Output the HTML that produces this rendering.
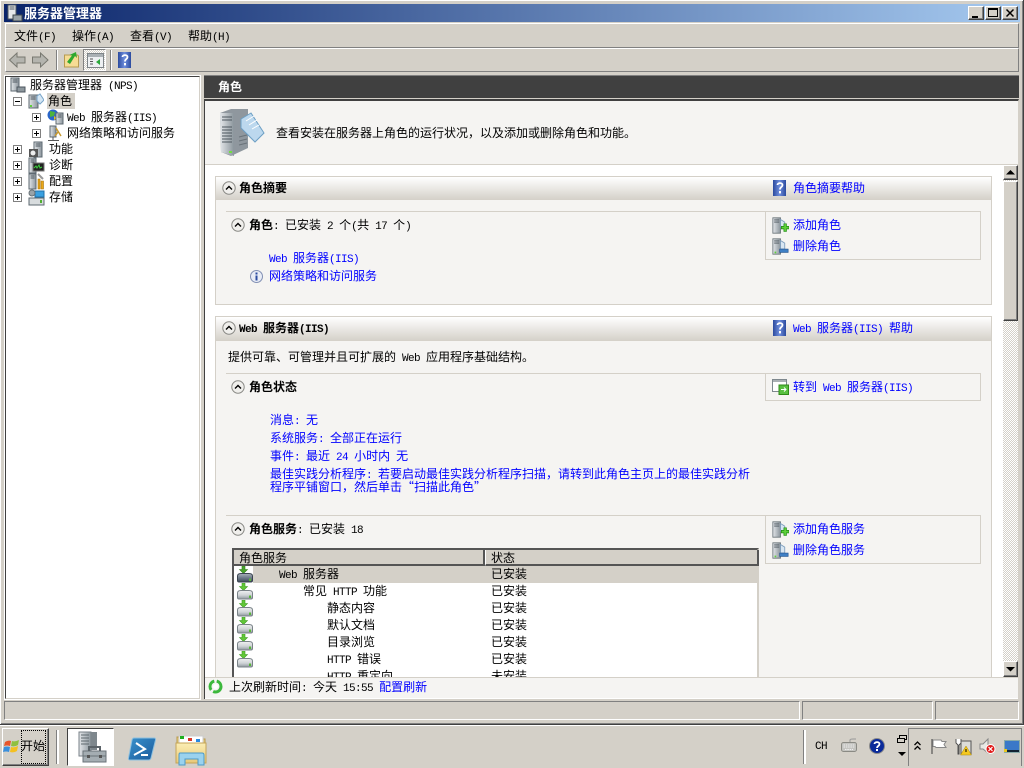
<!DOCTYPE html>
<html lang="zh"><head><meta charset="utf-8"><title>服务器管理器</title>
<style>
*{box-sizing:border-box}
html,body{margin:0;padding:0;width:1024px;height:768px;overflow:hidden;background:#d4d0c8}
.a{position:absolute}
.t{position:absolute;white-space:pre;font:12px/12px "WenQuanYi Zen Hei","Noto Sans CJK SC",sans-serif;color:#000;height:12px}
.t i{font:normal 11px/12px "Liberation Mono",monospace;letter-spacing:-.6px}
.t u{text-decoration:none;font-family:"Noto Sans CJK SC",sans-serif}
.b{font-weight:bold}.b i{font-weight:bold}
.l{color:#00f}
.bar{border:1px solid;border-color:#fff #808080 #808080 #fff}
.hd{background:linear-gradient(#fff,#d4d0c8)}
svg{position:absolute;overflow:visible}
.btn{position:absolute;background:#d4d0c8;border:1px solid;border-color:#fff #404040 #404040 #fff;box-shadow:inset -1px -1px 0 #808080}
</style></head>
<body>
<svg width="0" height="0" style="position:absolute">
<defs>
<linearGradient id="srv" x1="0" x2="1"><stop offset="0" stop-color="#e4e7ea"/><stop offset="1" stop-color="#8b959c"/></linearGradient>
<linearGradient id="hb" x1="0" x2="1"><stop offset="0" stop-color="#2b4a9e"/><stop offset=".5" stop-color="#6f8edc"/><stop offset="1" stop-color="#2b4a9e"/></linearGradient>
<linearGradient id="dv" x1="0" y1="0" x2="0" y2="1"><stop offset="0" stop-color="#f0f1f2"/><stop offset=".55" stop-color="#cfd3d6"/><stop offset="1" stop-color="#8f989e"/></linearGradient>
<linearGradient id="dvs" x1="0" y1="0" x2="0" y2="1"><stop offset="0" stop-color="#aab2ba"/><stop offset=".5" stop-color="#6f7c8a"/><stop offset="1" stop-color="#3f4a58"/></linearGradient>
<linearGradient id="ps" x1="0" y1="0" x2="1" y2="1"><stop offset="0" stop-color="#3a92cc"/><stop offset="1" stop-color="#1a5a9c"/></linearGradient>
<linearGradient id="fd" x1="0" y1="0" x2="0" y2="1"><stop offset="0" stop-color="#fbeeb4"/><stop offset="1" stop-color="#e8c878"/></linearGradient>
<symbol id="up" viewBox="0 0 14 14"><circle cx="7" cy="7" r="6.200" fill="#f0efec" stroke="#8a8a86"/><path d="M4 8.500 7 5.500 10 8.500" fill="none" stroke="#000" stroke-width="1.400"/></symbol>
<symbol id="help" viewBox="0 0 13 16"><rect width="13" height="16" fill="url(#hb)"/><path d="M4.500 5C4.500 2.500 9.500 2.500 9.500 5 9.500 7 7 7 7 9.500" fill="none" stroke="#fff" stroke-width="1.800"/><rect x="6" y="11" width="2" height="2.400" fill="#fff"/></symbol>
<symbol id="drv" viewBox="0 0 16 17"><path d="M5 0h3v3.500h2.500L6.500 7.500 2.500 3.500H5z" fill="#62c838" stroke="#3a9a20" stroke-width=".6"/><path d="M.5 10Q.5 7.500 4 7.500h8q3.500 0 3.500 2.500v4.500q0 1.500-1.500 1.500H2Q.5 16 .5 14.500z" fill="url(#dv)" stroke="#7a8388"/><rect x="12" y="12.500" width="2" height="2.500" fill="#58b838"/></symbol>
<symbol id="drvs" viewBox="0 0 16 17"><path d="M5 0h3v3.500h2.500L6.500 7.500 2.500 3.500H5z" fill="#4aa42c" stroke="#2f8018" stroke-width=".6"/><path d="M.5 10Q.5 7.500 4 7.500h8q3.500 0 3.500 2.500v4.500q0 1.500-1.500 1.500H2Q.5 16 .5 14.500z" fill="url(#dvs)" stroke="#3a4450"/><rect x="12" y="12.500" width="2" height="2.500" fill="#58b838"/></symbol>
<symbol id="add" viewBox="0 0 20 20"><path d="M1 1h9v18H1z" fill="url(#srv)" stroke="#6a747a"/><path d="M2.500 3.500h6M2.500 6h6" stroke="#4c565e"/><path d="M10 3l5 3v6h-5z" fill="#d8e6f2" stroke="#7b9cbc"/><path d="M11 11h3V8h3v3h3v3h-3v3h-3v-3h-3z" fill="#5dd03a" stroke="#1e8a12" stroke-width=".8"/></symbol>
<symbol id="del" viewBox="0 0 20 20"><path d="M1 1h9v18H1z" fill="url(#srv)" stroke="#6a747a"/><path d="M2.500 3.500h6M2.500 6h6" stroke="#4c565e"/><rect x="3" y="16" width="2" height="2" fill="#5fd03a"/><path d="M10 3l5 3v7h-5z" fill="#d8e6f2" stroke="#7b9cbc"/><rect x="9" y="13" width="10" height="4" fill="#3f7fc4" stroke="#20508c" stroke-width=".7"/></symbol>
<symbol id="mini" viewBox="0 0 16 16"><path d="M1 2h9v13H1z" fill="url(#srv)" stroke="#5d6870"/><path d="M2.500 4h5M2.500 6h5" stroke="#4c565e"/><rect x="2" y="12" width="2" height="2" fill="#5fd03a"/><path d="M9 3l3-2 4 6-4 4-3-3z" fill="#d4e6f4" stroke="#78a4c8"/></symbol>
</defs></svg>

<!-- window frame -->
<div class="a" style="left:0;top:0;width:1024px;height:725px;background:#d4d0c8;border-bottom:1px solid #404040;border-right:1px solid #404040;box-shadow:inset 1px 1px 0 #fff,inset -1px -1px 0 #808080"></div>
<!-- title bar -->
<div class="a" style="left:4px;top:4px;width:1016px;height:18px;background:linear-gradient(90deg,#0a246a,#a6caf0)"></div>
<svg style="left:6px;top:4px" width="17" height="18" viewBox="0 0 17 18"><path d="M2 1h8v14H2z" fill="#e6e8ea" stroke="#4c565e"/><path d="M3.500 3h5M3.500 5h5" stroke="#4c565e"/><rect x="7" y="11" width="9" height="6" fill="#9aa3a8" stroke="#3e474c"/></svg>
<div class="t b" style="left:24px;top:7px;color:#fff;font-size:13px">服务器管理器</div>
<div class="btn" style="left:968px;top:6px;width:16px;height:14px"><div class="a" style="left:3px;top:9px;width:6px;height:2px;background:#000"></div></div>
<div class="btn" style="left:985px;top:6px;width:16px;height:14px"><div class="a" style="left:2px;top:1px;width:10px;height:9px;border:1px solid #000;border-top-width:2px"></div></div>
<div class="btn" style="left:1002px;top:6px;width:16px;height:14px"><svg style="left:3px;top:2px" width="9" height="8"><path d="M0.500 0.500l7 7M7.500 0.500l-7 7" stroke="#000" stroke-width="1.500"/></svg></div>

<!-- menu -->
<div class="a bar" style="left:5px;top:23px;width:1014px;height:25px"></div>
<div class="t" style="left:14px;top:30px">文件<i>(F)</i></div>
<div class="t" style="left:72px;top:30px">操作<i>(A)</i></div>
<div class="t" style="left:130px;top:30px">查看<i>(V)</i></div>
<div class="t" style="left:188px;top:30px">帮助<i>(H)</i></div>
<!-- toolbar -->
<div class="a bar" style="left:5px;top:48px;width:1014px;height:24px"></div>
<svg style="left:9px;top:52px" width="40" height="16" viewBox="0 0 40 16"><path d="M0.500 8 8 1v4h8v6H8v4z" fill="#b4b4ae" stroke="#77776f"/><path d="M39 8 31.500 1v4h-8v6h8v4z" fill="#b4b4ae" stroke="#77776f"/></svg>
<div class="a" style="left:56px;top:50px;width:2px;height:20px;background:#fff;border-left:1px solid #808080"></div>
<svg style="left:64px;top:51px" width="15" height="17" viewBox="0 0 15 17"><path d="M.5 4h13l1 1v11H.5z" fill="#f6dc94" stroke="#b69a50"/><path d="M3 11 8 4.500 5.500 4 12 1l1 6-2-2-5 8z" fill="#2ea82e"/></svg>
<div class="a" style="left:83px;top:49px;width:23px;height:22px;background:repeating-conic-gradient(#d4d0c8 0 25%,#fff 0 50%) 0 0/2px 2px;border:1px solid;border-color:#808080 #fff #fff #808080"></div>
<svg style="left:87px;top:53px" width="17" height="15" viewBox="0 0 17 15"><rect x=".5" y=".5" width="16" height="14" fill="#eef0f2" stroke="#7e8488"/><rect x="1" y="1" width="15" height="3" fill="#aab0b4"/><path d="M3 6h3M3 8.500h3M3 11h3" stroke="#555"/><path d="M13 6v6l-4-3z" fill="#2aa83a"/></svg>
<div class="a" style="left:110px;top:50px;width:2px;height:20px;background:#fff;border-left:1px solid #808080"></div>
<svg style="left:118px;top:52px" width="13" height="16"><use href="#help"/></svg>

<!-- left pane -->
<div class="a" style="left:5px;top:76px;width:195px;height:623px;background:#fff;border:1px solid;border-color:#404040 #d4d0c8 #d4d0c8 #404040;box-shadow:0 0 0 1px #fff"></div>
<svg style="left:10px;top:77px" width="16" height="16" viewBox="0 0 16 16"><path d="M1 1h8v13H1z" fill="url(#srv)" stroke="#5d6870"/><path d="M2.500 3h5M2.500 5h5" stroke="#4c565e"/><rect x="7" y="10" width="8" height="5" fill="#8d979d" stroke="#4c565e"/></svg>
<div class="t" style="left:30px;top:79px">服务器管理器<i> (NPS)</i></div>
<div class="a" style="left:47px;top:93px;width:28px;height:16px;background:#d4d0c8"></div>
<div class="t" style="left:48px;top:95px">角色</div>
<svg style="left:28px;top:93px" width="16" height="16"><use href="#mini"/></svg>
<div class="t" style="left:67px;top:111px"><i>Web </i>服务器<i>(IIS)</i></div>
<svg style="left:47px;top:109px" width="17" height="16" viewBox="0 0 17 16"><circle cx="6" cy="6" r="5.500" fill="#2a66c8"/><path d="M3 2l5 1-1 4-4 1z" fill="#4cb43a"/><path d="M7 7l3 2-3 2z" fill="#e8c020"/><path d="M9 4h7v11H9z" fill="url(#srv)" stroke="#5d6870"/><path d="M10.500 6h4M10.500 8h4" stroke="#4c565e"/></svg>
<div class="t" style="left:67px;top:127px">网络策略和访问服务</div>
<svg style="left:47px;top:125px" width="17" height="17" viewBox="0 0 17 17"><path d="M3 1h6v11H3z" fill="url(#srv)" stroke="#5d6870"/><path d="M9 3l5 8M11 7l-3 4" stroke="#c89a30" stroke-width="1.500"/><path d="M6 12v3M1 15.500h11" stroke="#555"/></svg>
<div class="t" style="left:49px;top:143px">功能</div>
<svg style="left:28px;top:141px" width="16" height="17" viewBox="0 0 16 17"><path d="M6 1h8v15H6z" fill="url(#srv)" stroke="#5d6870"/><path d="M7.500 3h5M7.500 5h5" stroke="#4c565e"/><rect x="1" y="8" width="9" height="8" fill="#555"/><circle cx="5" cy="12" r="2.500" fill="#eee"/></svg>
<div class="t" style="left:49px;top:159px">诊断</div>
<svg style="left:28px;top:157px" width="16" height="17" viewBox="0 0 16 17"><path d="M1 1h7v15H1z" fill="url(#srv)" stroke="#5d6870"/><path d="M2.500 3h4M2.500 5h4" stroke="#4c565e"/><rect x="5" y="6" width="11" height="8" fill="#222" stroke="#777"/><path d="M6 11l2-2 1 2 2-3 1 3 2-1" stroke="#3ecf3e" fill="none"/></svg>
<div class="t" style="left:49px;top:175px">配置</div>
<svg style="left:28px;top:173px" width="16" height="17" viewBox="0 0 16 17"><path d="M1 1h7v15H1z" fill="url(#srv)" stroke="#5d6870"/><path d="M2.500 3h4M2.500 5h4" stroke="#4c565e"/><path d="M10 6h2v10h-2zM13 8h2.500v8H13z" fill="#eaa818" stroke="#a87410" stroke-width=".6"/><path d="M10 1l5 5" stroke="#999" stroke-width="2"/></svg>
<div class="t" style="left:49px;top:191px">存储</div>
<svg style="left:28px;top:189px" width="17" height="17" viewBox="0 0 17 17"><rect x="1" y="9" width="15" height="7" fill="#d8dcde" stroke="#5d6870"/><rect x="12" y="11" width="2" height="3" fill="#50b030"/><rect x="7" y="2" width="9" height="6" fill="#3aa0e0" stroke="#2070a8"/><circle cx="4" cy="4" r="3" fill="#9aa3a8" stroke="#6a7378"/></svg>
<!-- expanders -->
<svg style="left:0;top:0" width="60" height="210" fill="#fff" stroke="#808080">
<rect x="13.500" y="97.500" width="8" height="8"/><path d="M15 101.500h5" stroke="#000"/>
<rect x="32.500" y="113.500" width="8" height="8"/><path d="M34 117.500h5M36.500 115v5" stroke="#000"/>
<rect x="32.500" y="129.500" width="8" height="8"/><path d="M34 133.500h5M36.500 131v5" stroke="#000"/>
<rect x="13.500" y="145.500" width="8" height="8"/><path d="M15 149.500h5M17.500 147v5" stroke="#000"/>
<rect x="13.500" y="161.500" width="8" height="8"/><path d="M15 165.500h5M17.500 163v5" stroke="#000"/>
<rect x="13.500" y="177.500" width="8" height="8"/><path d="M15 181.500h5M17.500 179v5" stroke="#000"/>
<rect x="13.500" y="193.500" width="8" height="8"/><path d="M15 197.500h5M17.500 195v5" stroke="#000"/>
</svg>

<!-- right pane -->
<div class="a" style="left:204px;top:75px;width:815px;height:1px;background:#808080"></div>
<div class="a" style="left:204px;top:76px;width:815px;height:22px;background:#404040"></div>
<div class="t b" style="left:218px;top:81px;color:#fff">角色</div>
<div class="a" style="left:204px;top:99px;width:815px;height:600px;background:#fff;border-top:2px solid #404040;border-left:1px solid #404040;border-right:1px solid #d4d0c8"></div>
<div class="a" style="left:205px;top:101px;width:813px;height:64px;background:#f5f4f2;border-bottom:1px solid #d4d0c8"></div>
<svg style="left:219px;top:108px" width="46" height="49" viewBox="0 0 46 49"><path d="M1 5 12 1h17v39L12 48 2 44z" fill="#8f979e"/><path d="M1 5h14v43L2 44z" fill="url(#srv)"/><path d="M3 9h10M3 12h10M3 19h10M3 22h10M3 25h10M3 28h10M3 31h10M3 34h10" stroke="#4c565e"/><rect x="10" y="43" width="3" height="2" fill="#6fe040"/><path d="M20 37l8-2M20 33l8-2M20 29l8-2" stroke="#6a737a"/><path d="M22 11l10-6 13 20-9 9-14-14z" fill="#bcd8ee" stroke="#6d9fc4"/><path d="M27 13l8-5M30 17l8-5M33 21l7-4" stroke="#fff"/></svg>
<div class="t" style="left:276px;top:127px">查看安装在服务器上角色的运行状况，以及添加或删除角色和功能。</div>

<!-- clipped content -->
<div class="a" style="left:205px;top:165px;width:798px;height:512px;overflow:hidden;background:#fff">
 <div class="a" style="left:-205px;top:-165px;width:1024px;height:768px">
  <!-- section 1 -->
  <div class="a" style="left:215px;top:176px;width:777px;height:129px;background:#f5f4f2;border:1px solid #d4d0c8"></div>
  <div class="a hd" style="left:216px;top:177px;width:775px;height:23px"></div>
  <svg style="left:222px;top:181px" width="14" height="14"><use href="#up"/></svg>
  <div class="t b" style="left:239px;top:182px">角色摘要</div>
  <svg style="left:773px;top:180px" width="13" height="16"><use href="#help"/></svg>
  <div class="t l" style="left:793px;top:182px">角色摘要帮助</div>
  <div class="a" style="left:226px;top:211px;width:540px;height:1px;background:#d4d0c8"></div>
  <div class="a" style="left:765px;top:211px;width:216px;height:49px;border:1px solid #d4d0c8"></div>
  <svg style="left:231px;top:218px" width="14" height="14"><use href="#up"/></svg>
  <div class="t" style="left:249px;top:219px"><span class="b">角色</span><i>: </i>已安装<i> 2 </i>个<i>(</i>共<i> 17 </i>个<i>)</i></div>
  <svg style="left:772px;top:217px" width="17" height="17"><use href="#add"/></svg>
  <div class="t l" style="left:793px;top:219px">添加角色</div>
  <svg style="left:772px;top:238px" width="17" height="17"><use href="#del"/></svg>
  <div class="t l" style="left:793px;top:240px">删除角色</div>
  <div class="t l" style="left:269px;top:252px"><i>Web </i>服务器<i>(IIS)</i></div>
  <svg style="left:250px;top:270px" width="13" height="13" viewBox="0 0 13 13"><circle cx="6.500" cy="6.500" r="6" fill="#e8ecf6" stroke="#8290b4"/><rect x="5.500" y="2.500" width="2" height="2" fill="#2a4aa0"/><rect x="5.500" y="5.500" width="2" height="5" fill="#2a4aa0"/></svg>
  <div class="t l" style="left:269px;top:270px">网络策略和访问服务</div>
  <!-- section 2 -->
  <div class="a" style="left:215px;top:316px;width:777px;height:400px;background:#f5f4f2;border:1px solid #d4d0c8"></div>
  <div class="a hd" style="left:216px;top:317px;width:775px;height:24px"></div>
  <svg style="left:222px;top:321px" width="14" height="14"><use href="#up"/></svg>
  <div class="t b" style="left:239px;top:322px"><i>Web </i>服务器<i>(IIS)</i></div>
  <svg style="left:773px;top:320px" width="13" height="16"><use href="#help"/></svg>
  <div class="t l" style="left:793px;top:322px"><i>Web </i>服务器<i>(IIS) </i>帮助</div>
  <div class="t" style="left:228px;top:351px">提供可靠、可管理并且可扩展的<i> Web </i>应用程序基础结构。</div>
  <div class="a" style="left:226px;top:373px;width:540px;height:1px;background:#d4d0c8"></div>
  <div class="a" style="left:765px;top:373px;width:216px;height:28px;border:1px solid #d4d0c8"></div>
  <svg style="left:231px;top:380px" width="14" height="14"><use href="#up"/></svg>
  <div class="t b" style="left:249px;top:381px">角色状态</div>
  <svg style="left:772px;top:379px" width="17" height="16" viewBox="0 0 17 16"><rect x=".5" y=".5" width="14" height="12" fill="#fff" stroke="#7e888e"/><rect x="1" y="1" width="13" height="2" fill="#aab0b4"/><rect x="7" y="6" width="9.500" height="9.500" fill="#58c040" stroke="#2f8a18"/><path d="M9 10.500h5M12 8.500l2 2-2 2" stroke="#fff" fill="none"/></svg>
  <div class="t l" style="left:793px;top:381px">转到<i> Web </i>服务器<i>(IIS)</i></div>
  <div class="t l" style="left:270px;top:414px">消息<i>: </i>无</div>
  <div class="t l" style="left:270px;top:432px">系统服务<i>: </i>全部正在运行</div>
  <div class="t l" style="left:270px;top:450px">事件<i>: </i>最近<i> 24 </i>小时内<i> </i>无</div>
  <div class="t l" style="left:270px;top:468px">最佳实践分析程序<i>: </i>若要启动最佳实践分析程序扫描，请转到此角色主页上的最佳实践分析</div>
  <div class="t l" style="left:270px;top:481px">程序平铺窗口，然后单击<u>“</u>扫描此角色<u>”</u></div>
  <div class="a" style="left:226px;top:515px;width:540px;height:1px;background:#d4d0c8"></div>
  <div class="a" style="left:765px;top:515px;width:216px;height:49px;border:1px solid #d4d0c8"></div>
  <svg style="left:231px;top:522px" width="14" height="14"><use href="#up"/></svg>
  <div class="t" style="left:249px;top:523px"><span class="b">角色服务</span><i>: </i>已安装<i> 18</i></div>
  <svg style="left:772px;top:521px" width="17" height="17"><use href="#add"/></svg>
  <div class="t l" style="left:793px;top:523px">添加角色服务</div>
  <svg style="left:772px;top:542px" width="17" height="17"><use href="#del"/></svg>
  <div class="t l" style="left:793px;top:544px">删除角色服务</div>
  <!-- table -->
  <div class="a" style="left:232px;top:548px;width:527px;height:180px;background:#fff;border:2px solid;border-color:#555 #d4d0c8 #d4d0c8 #555"></div>
  <div class="a" style="left:234px;top:550px;width:251px;height:16px;background:#d4d0c8;border-right:2px solid #555;border-bottom:2px solid #555"></div>
  <div class="a" style="left:485px;top:550px;width:274px;height:16px;background:#d4d0c8;border-left:1px solid #fff;border-right:2px solid #555;border-bottom:2px solid #555"></div>
  <div class="t" style="left:239px;top:552px">角色服务</div>
  <div class="t" style="left:491px;top:552px">状态</div>
  <div class="a" style="left:253px;top:566px;width:505px;height:17px;background:#d4d0c8"></div>
  <svg style="left:237px;top:566px" width="16" height="17"><use href="#drvs"/></svg>
  <svg style="left:237px;top:583px" width="16" height="17"><use href="#drv"/></svg>
  <svg style="left:237px;top:600px" width="16" height="17"><use href="#drv"/></svg>
  <svg style="left:237px;top:617px" width="16" height="17"><use href="#drv"/></svg>
  <svg style="left:237px;top:634px" width="16" height="17"><use href="#drv"/></svg>
  <svg style="left:237px;top:651px" width="16" height="17"><use href="#drv"/></svg>
  <div class="t" style="left:279px;top:568px"><i>Web </i>服务器</div><div class="t" style="left:491px;top:568px">已安装</div>
  <div class="t" style="left:303px;top:585px">常见<i> HTTP </i>功能</div><div class="t" style="left:491px;top:585px">已安装</div>
  <div class="t" style="left:327px;top:602px">静态内容</div><div class="t" style="left:491px;top:602px">已安装</div>
  <div class="t" style="left:327px;top:619px">默认文档</div><div class="t" style="left:491px;top:619px">已安装</div>
  <div class="t" style="left:327px;top:636px">目录浏览</div><div class="t" style="left:491px;top:636px">已安装</div>
  <div class="t" style="left:327px;top:653px"><i>HTTP </i>错误</div><div class="t" style="left:491px;top:653px">已安装</div>
  <div class="t" style="left:327px;top:670px"><i>HTTP </i>重定向</div><div class="t" style="left:491px;top:670px">未安装</div>
 </div>
</div>

<!-- scrollbar -->
<div class="a" style="left:1003px;top:165px;width:15px;height:512px;background:repeating-conic-gradient(#d4d0c8 0 25%,#fff 0 50%) 0 0/2px 2px"></div>
<div class="btn" style="left:1003px;top:165px;width:15px;height:15px"><svg style="left:2px;top:4px" width="9" height="5"><path d="M4.500 0 9 4.500H0z" fill="#000"/></svg></div>
<div class="btn" style="left:1003px;top:181px;width:15px;height:140px"></div>
<div class="btn" style="left:1003px;top:661px;width:15px;height:16px"><svg style="left:2px;top:5px" width="9" height="5"><path d="M0 0h9L4.500 4.500z" fill="#000"/></svg></div>

<!-- bottom refresh -->
<div class="a" style="left:205px;top:677px;width:813px;height:21px;background:#f5f4f2;border-top:1px solid #d4d0c8"></div>
<svg style="left:208px;top:679px" width="15" height="15" viewBox="0 0 15 15"><circle cx="7.500" cy="7.500" r="5.500" fill="none" stroke="#3cb83c" stroke-width="3" stroke-dasharray="11 2.500"/><circle cx="7.500" cy="7.500" r="2.500" fill="#fff"/></svg>
<div class="t" style="left:229px;top:681px">上次刷新时间<i>: </i>今天<i> 15:55 </i><span class="l">配置刷新</span></div>

<!-- status bar -->
<div class="a" style="left:4px;top:701px;width:796px;height:19px;border:1px solid;border-color:#808080 #fff #fff #808080"></div>
<div class="a" style="left:802px;top:701px;width:131px;height:19px;border:1px solid;border-color:#808080 #fff #fff #808080"></div>
<div class="a" style="left:935px;top:701px;width:84px;height:19px;border:1px solid;border-color:#808080 #fff #fff #808080"></div>

<!-- taskbar -->
<div class="a" style="left:0;top:725px;width:1024px;height:43px;background:#d4d0c8;border-top:1px solid #fff"></div>
<div class="btn" style="left:2px;top:728px;width:47px;height:38px"></div>
<svg style="left:4px;top:738px" width="16" height="16" viewBox="0 0 16 16"><path d="M1 4q3-2 6-1l-1 5q-3-1-6 0z" fill="#e8552a"/><path d="M8 3q3 1 7-1l-1 5q-3 2-7 1z" fill="#8fc040"/><path d="M0 9q3-1 6 0l-1 5q-3-1-6 0z" fill="#3a8fdc"/><path d="M7 9q3 1 7-1l-1 5q-3 2-7 1z" fill="#f4c020"/></svg>
<div class="a" style="left:21px;top:730px;width:25px;height:34px;border:1px dotted #000"></div>
<div class="t" style="left:21px;top:740px">开始</div>
<div class="a" style="left:56px;top:730px;width:3px;height:34px;background:#fff;border-left:1px solid #808080"></div>
<div class="a" style="left:67px;top:728px;width:47px;height:38px;background:#fff;border:1px solid;border-color:#404040 #fff #fff #404040"></div>
<svg style="left:78px;top:730px" width="30" height="33" viewBox="0 0 30 33"><path d="M1 2h12v24H1z" fill="url(#srv)" stroke="#7a8288"/><path d="M13 2h6v18h-6z" fill="#7e878d"/><path d="M3 5h8M3 8h8M3 11h8M3 14h8" stroke="#5e686e"/><path d="M5 21h23v11H5z" fill="#a4adb2" stroke="#6a7278"/><path d="M5 26h23" stroke="#6a7278"/><path d="M11 21v-4h11v4" fill="none" stroke="#5a6268" stroke-width="2"/><rect x="9" y="25" width="3" height="3" fill="#555"/><rect x="21" y="25" width="3" height="3" fill="#555"/></svg>
<svg style="left:127px;top:736px" width="30" height="28" viewBox="0 0 30 28"><path d="M7 2h20q2 0 1.500 2L24 22q-.5 2-2.500 2H3q-2 0-1.500-2L5 4q.5-2 2-2z" fill="url(#ps)" stroke="#8cc0e0"/><path d="M9 7l9 6-11 6M14 19h7" fill="none" stroke="#fff" stroke-width="2"/></svg>
<svg style="left:175px;top:733px" width="32" height="34" viewBox="0 0 32 34"><path d="M2 4h10l2 2h16v24H2z" fill="#e8cc7a" stroke="#b89a4c"/><path d="M4 3h24v8H4z" fill="#fff" stroke="#ccc"/><rect x="5" y="3" width="4" height="3" fill="#20b020"/><rect x="13" y="5" width="4" height="3" fill="#d83a2a"/><rect x="21" y="6" width="4" height="3" fill="#2a8ae0"/><path d="M1 10h30v20H1z" fill="url(#fd)" stroke="#c4a458"/><path d="M5 20h22q2 0 2 2v10h-6v-6H10v6H4V22q0-2 1-2z" fill="#9ad2ee" stroke="#4c9ac8"/></svg>
<div class="a" style="left:803px;top:730px;width:3px;height:34px;background:#fff;border-left:1px solid #808080"></div>
<div class="t" style="left:815px;top:739px"><i>CH</i></div>
<svg style="left:841px;top:738px" width="17" height="15" viewBox="0 0 17 15"><path d="M9 4V2q0-1 3-1h3" fill="none" stroke="#999"/><rect x=".5" y="4.500" width="15" height="9" rx="2" fill="#c4c4c0" stroke="#8a8a84"/><path d="M2.500 7h11M2.500 9h11M4 11.500h8" stroke="#eee" stroke-dasharray="1.500 .8"/></svg>
<svg style="left:869px;top:738px" width="16" height="16" viewBox="0 0 16 16"><circle cx="8" cy="8" r="7.500" fill="#0a2a9a" stroke="#8a8a8a"/><path d="M5.500 6C5.500 3.500 10.500 3.500 10.500 6 10.500 8 8 8 8 10" fill="none" stroke="#fff" stroke-width="1.800"/><rect x="7" y="11" width="2" height="2" fill="#fff"/></svg>
<svg style="left:896px;top:735px" width="12" height="22" viewBox="0 0 12 22"><rect x="3.500" y=".5" width="7" height="4" fill="none" stroke="#000"/><rect x="1.500" y="3.500" width="7" height="4" fill="#d4d0c8" stroke="#000"/><path d="M2 17h8l-4 4z" fill="#000"/></svg>
<div class="a" style="left:908px;top:728px;width:114px;height:38px;border-left:1px solid #808080;border-top:1px solid #808080;border-right:1px solid #808080"></div>
<svg style="left:914px;top:741px" width="7" height="10" viewBox="0 0 7 10"><path d="M.5 4 3.500 1l3 3M.5 8.500l3-3 3 3" fill="none" stroke="#000" stroke-width="1.300"/></svg>
<svg style="left:930px;top:738px" width="17" height="17" viewBox="0 0 17 17"><path d="M2 1v15" stroke="#555" stroke-width="1.200"/><path d="M3 2h8l1 1.500h4l-2 3 2 3H6l-1-1H3z" fill="#fff" stroke="#888"/></svg>
<svg style="left:955px;top:738px" width="17" height="17" viewBox="0 0 17 17"><path d="M1 1v4l2 2v9h1V7l2-2V1" fill="#fff" stroke="#444" stroke-width=".9"/><rect x="6" y="3" width="10" height="13" fill="#dcdcd8" stroke="#555"/><path d="M11 8l5.500 9h-11z" fill="#f4c820" stroke="#a8860c" stroke-width=".5"/><path d="M11 11v3" stroke="#000"/></svg>
<svg style="left:979px;top:738px" width="17" height="17" viewBox="0 0 17 17"><path d="M1 6h3l5-5v14l-5-4H1z" fill="#e8e8e4" stroke="#888"/><circle cx="11.500" cy="11" r="4.500" fill="#e01818" stroke="#fff"/><path d="M9.500 9l4 4M13.500 9l-4 4" stroke="#fff" stroke-width="1.200"/></svg>
<svg style="left:1004px;top:740px" width="16" height="14" viewBox="0 0 16 14"><rect x=".5" y=".5" width="15" height="12" fill="#3a78c8" stroke="#8aa"/><rect x="3" y="10" width="12" height="2" fill="#123"/><rect x="0" y="9" width="3" height="3" fill="#e8c820"/></svg>
</body></html>
